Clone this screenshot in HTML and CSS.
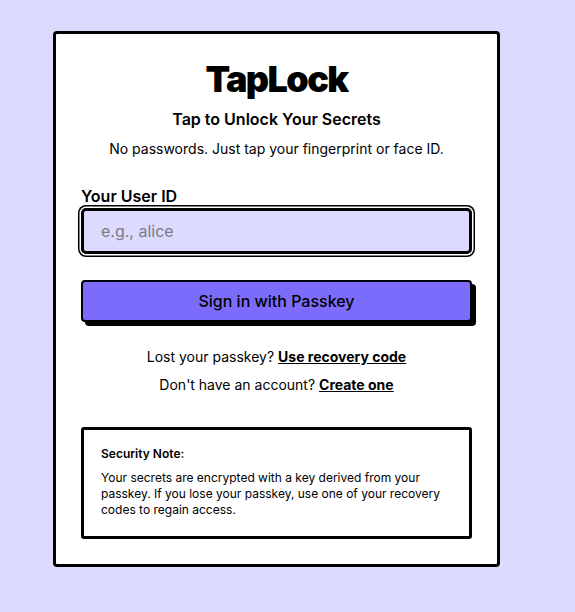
FILE: index.html
```html
<!DOCTYPE html>
<html lang="en">
<head>
<meta charset="utf-8">
<title>TapLock</title>
<link rel="stylesheet" href="styles.css">
</head>
<body>
<main class="card">
  <h1 class="brand">TapLock</h1>
  <h2 class="tagline">Tap to Unlock Your Secrets</h2>
  <p class="lead">No passwords. Just tap your fingerprint or face ID.</p>
  <form class="form">
    <label class="label" for="uid">Your User ID</label>
    <input class="input" id="uid" type="text" placeholder="e.g., alice">
    <button class="btn" type="button">Sign in with Passkey</button>
  </form>
  <div class="links">
    <p class="link-line">Lost your passkey? <a href="#">Use recovery code</a></p>
    <p class="link-line">Don't have an account? <a href="#">Create one</a></p>
  </div>
  <section class="note">
    <h3 class="note-title">Security Note:</h3>
    <p class="note-text">Your secrets are encrypted with a key derived from your passkey. If you lose your passkey, use one of your recovery codes to regain access.</p>
  </section>
</main>
</body>
</html>
```
FILE: styles.css
```css
* { box-sizing: border-box; }
html, body { margin: 0; padding: 0; }
body {
  background: #dddbfd;
  font-family: Inter, "Noto Sans", "Liberation Sans", sans-serif;
  color: #000;
  padding: 31px 0 0 53px;
}
.card {
  width: 447px;
  background: #fff;
  border: 3px solid #000;
  border-radius: 4px;
  padding: 24px 25px 25px;
  text-align: center;
}
.brand {
  margin: 0;
  font-size: 36px;
  line-height: 43px;
  font-weight: 900;
  letter-spacing: -1.6px;
}
.tagline {
  margin: 6px 0 0;
  font-size: 16px;
  line-height: 24px;
  font-weight: 600;
}
.lead {
  margin: 8px 0 0;
  font-size: 14px;
  line-height: 20px;
}
.form {
  display: flex;
  flex-direction: column;
  align-items: stretch;
  text-align: left;
  margin-top: 25px;
}
.label {
  font-size: 16px;
  line-height: 24px;
  font-weight: 600;
}
.input {
  height: 46px;
  border: 3px solid #000;
  border-radius: 5px;
  background: #dddbfd;
  padding: 0 17px;
  font: inherit;
  font-size: 16px;
  box-shadow: 0 0 0 1.5px #fff, 0 0 0 3px #000;
  outline: none;
}
.input::placeholder { color: #7a7a85; }
.btn {
  margin-top: 26px;
  height: 42px;
  width: 100%;
  border: 2px solid #000;
  border-radius: 4px;
  background: #7b6cfb;
  box-shadow: 4px 4px 0 #000;
  font: inherit;
  font-size: 16px;
  font-weight: 500;
  color: #000;
}
.links {
  margin-top: 25px;
  display: flex;
  flex-direction: column;
  gap: 8px;
}
.link-line {
  margin: 0;
  font-size: 14px;
  line-height: 20px;
}
.link-line a {
  color: #000;
  font-weight: 700;
  text-decoration: underline;
}
.note {
  margin-top: 32px;
  border: 3px solid #000;
  border-radius: 3px;
  padding: 16px 17px 18px;
  text-align: left;
}
.note-title {
  margin: 0;
  font-size: 12px;
  line-height: 16px;
  font-weight: 600;
}
.note-text {
  margin: 8px 0 0;
  font-size: 12px;
  line-height: 16px;
}
```
